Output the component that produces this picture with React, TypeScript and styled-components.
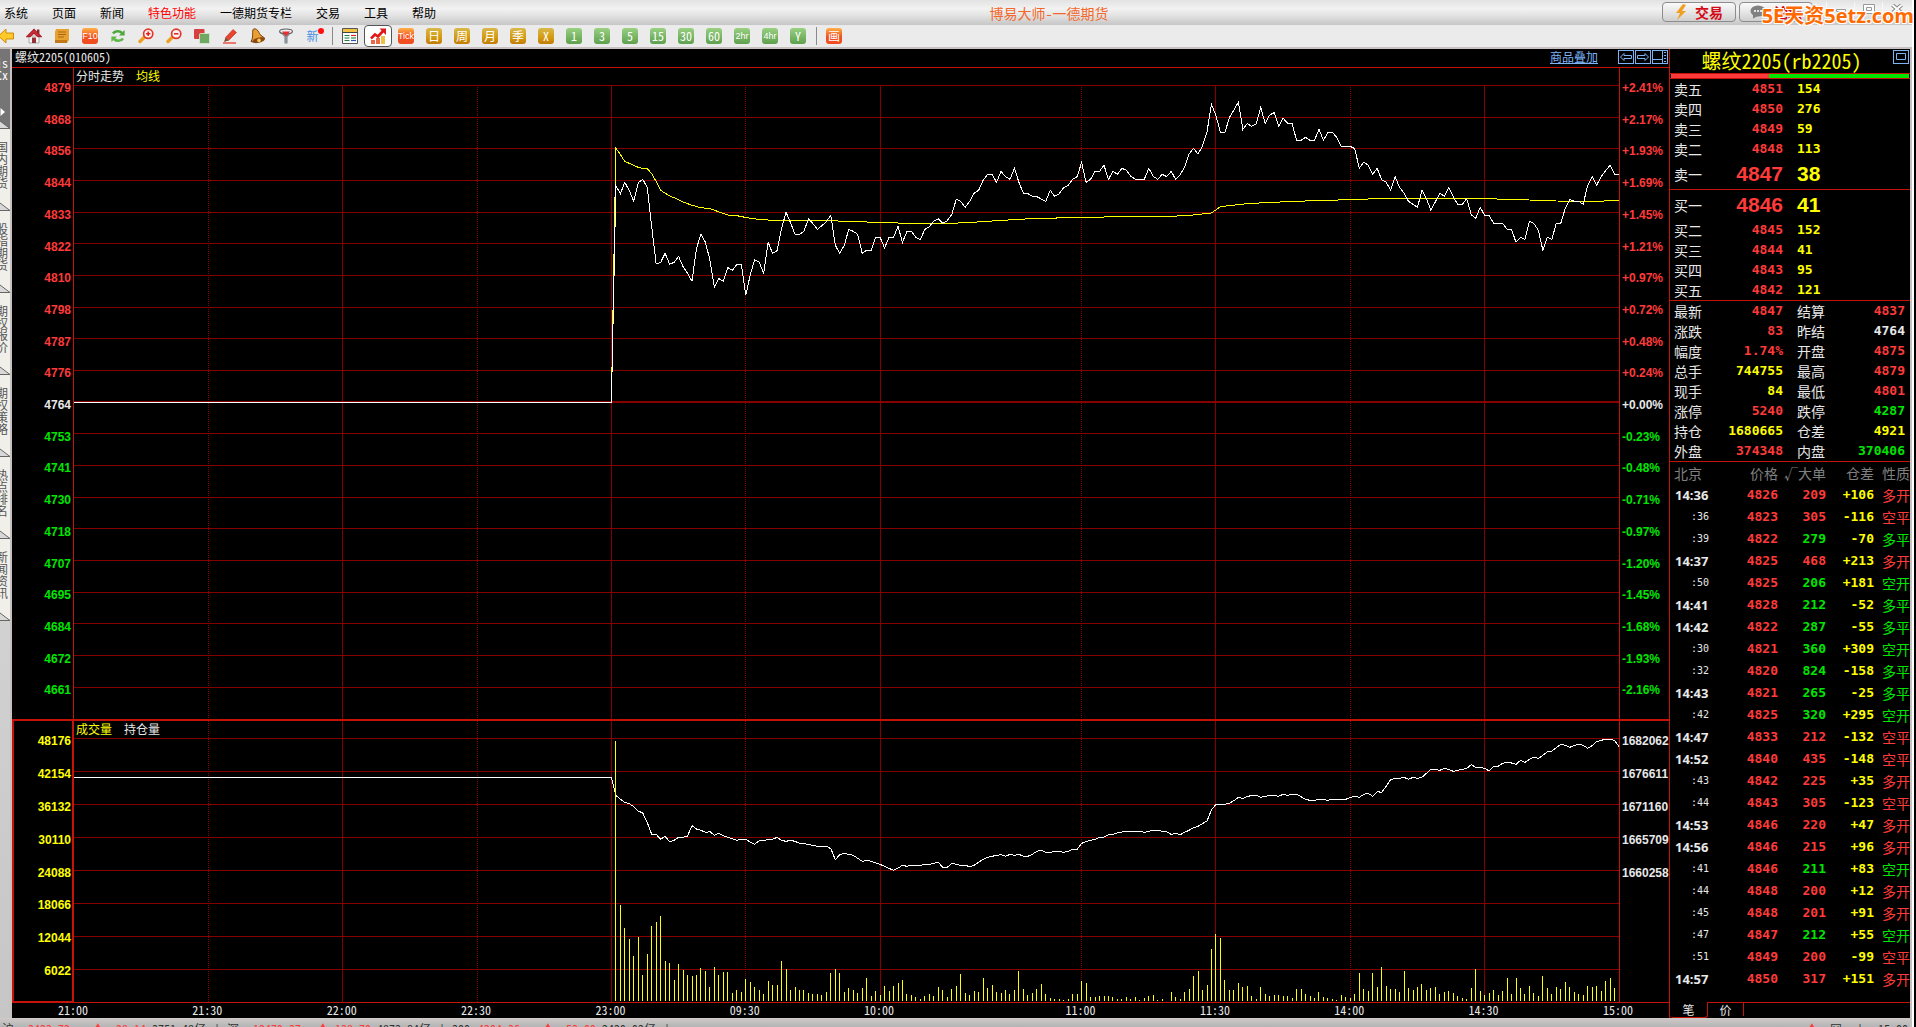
import React from "react";
import styled, { createGlobalStyle } from "styled-components";

/* ---------- theme values ---------- */

const RED = "#ff3a3a";
const GREEN = "#00e600";
const YELLOW = "#ffff00";
const WHITE = "#e8e8e8";
const FRAME = "#c41408";
const GRID = "#860000";
const BLUE = "#7db4f5";

const SONG = '"Noto Sans Mono CJK SC", "Noto Sans CJK SC", monospace';
const MONO = '"DejaVu Sans Mono", "Noto Sans CJK SC", monospace';
const ARIAL = '"Liberation Sans", "Noto Sans CJK SC", sans-serif';

const toneColor: Record<string, string> = {
  r: RED,
  g: GREEN,
  y: YELLOW,
  w: WHITE,
};

const GlobalStyle = createGlobalStyle`
  *, *::before, *::after { box-sizing: border-box; }
  body { margin: 0; background: #000; overflow: hidden; }
  button, a { font: inherit; color: inherit; }
  button { padding: 0; border: 0; background: none; cursor: pointer; }
  svg { display: block; }
`;

/* ---------- data ---------- */

const menus = ["系统", "页面", "新闻", "特色功能", "一德期货专栏", "交易", "工具", "帮助"];

const priceLabels = [
  4879, 4868, 4856, 4844, 4833, 4822, 4810, 4798, 4787, 4776, 4764, 4753, 4741, 4730, 4718, 4707,
  4695, 4684, 4672, 4661,
];
const percentLabels = [
  "+2.41%", "+2.17%", "+1.93%", "+1.69%", "+1.45%", "+1.21%", "+0.97%", "+0.72%", "+0.48%",
  "+0.24%", "+0.00%", "-0.23%", "-0.48%", "-0.71%", "-0.97%", "-1.20%", "-1.45%", "-1.68%",
  "-1.93%", "-2.16%",
];
const volumeLabels = ["48176", "42154", "36132", "30110", "24088", "18066", "12044", "6022"];
const interestLabels = ["1682062", "1676611", "1671160", "1665709", "1660258", "", "", ""];

/* session length up to the next label, in trading minutes */
const timeAxis: [string, number][] = [
  ["21:00", 30], ["21:30", 30], ["22:00", 30], ["22:30", 30], ["23:00", 30], ["09:30", 30],
  ["10:00", 45], ["11:00", 30], ["11:30", 30], ["14:00", 30], ["14:30", 30], ["15:00", 0],
];
const TOTAL_MINUTES = 345;
const NIGHT_MINUTES = 120;

/* one value per minute from the 23:00 mark, in vertical plot units */
const price = [
  967, 317, 341, 307, 332, 364, 308, 298, 322, 440, 552, 547, 520, 553, 547, 529, 560, 580, 604,
  505, 463, 487, 540, 622, 596, 604, 563, 571, 553, 553, 646, 585, 539, 546, 580, 487, 520, 512,
  445, 397, 428, 463, 463, 454, 416, 431, 448, 437, 425, 406, 496, 520, 496, 448, 454, 463, 520,
  511, 511, 472, 472, 504, 472, 472, 439, 487, 454, 454, 472, 479, 448, 440, 424, 416, 430, 422,
  404, 358, 364, 382, 364, 340, 331, 301, 283, 283, 307, 274, 290, 298, 265, 307, 340, 341, 349,
  350, 357, 364, 331, 349, 341, 323, 316, 298, 290, 247, 307, 298, 274, 274, 256, 298, 274, 283,
  265, 271, 289, 298, 298, 298, 265, 289, 298, 283, 290, 274, 298, 284, 262, 222, 205, 222, 198,
  155, 73, 107, 157, 157, 113, 90, 67, 148, 131, 139, 131, 82, 131, 105, 98, 139, 115, 130, 130,
  181, 181, 172, 181, 181, 148, 181, 157, 157, 173, 199, 199, 199, 206, 265, 247, 255, 283, 265,
  299, 306, 331, 290, 322, 340, 364, 373, 382, 331, 356, 391, 365, 340, 349, 322, 350, 374, 374,
  356, 404, 415, 382, 406, 406, 430, 430, 430, 447, 448, 487, 472, 478, 424, 431, 451, 511, 472,
  478, 430, 430, 385, 358, 364, 364, 373, 316, 290, 316, 290, 272, 256, 283, 283,
];

const average: [number, number][] = [
  [0, 967], [1, 205], [2, 223], [3, 245], [4, 250], [6, 262], [7, 265], [8, 266], [9, 281],
  [10, 305], [11, 331], [13, 348], [14, 353], [16, 366], [18, 376], [20, 383], [22, 386],
  [26, 405], [28, 407], [31, 415], [33, 418], [36, 421], [50, 422], [51, 424], [57, 426],
  [60, 427], [66, 430], [76, 430], [83, 425], [86, 422], [91, 418], [95, 415], [104, 413],
  [113, 410], [125, 409], [130, 405], [134, 399], [136, 380], [142, 371], [146, 368], [151, 365],
  [157, 362], [165, 359], [171, 356], [195, 356], [203, 359], [211, 363], [220, 364], [225, 361],
];

const interest = [
  232, 286, 298, 307, 311, 320, 333, 339, 367, 403, 403, 418, 409, 425, 421, 412, 412, 408, 377,
  387, 391, 397, 395, 406, 400, 407, 412, 416, 421, 418, 418, 426, 433, 422, 422, 418, 418, 412,
  421, 424, 421, 424, 430, 431, 433, 436, 439, 439, 439, 446, 479, 464, 460, 463, 466, 475, 484,
  481, 484, 489, 493, 499, 505, 511, 504, 496, 499, 496, 496, 496, 493, 493, 490, 487, 502, 502,
  490, 493, 496, 496, 500, 496, 487, 478, 472, 469, 466, 464, 469, 463, 466, 463, 469, 469, 463,
  454, 451, 457, 457, 454, 454, 457, 454, 448, 448, 430, 425, 421, 418, 412, 411, 404, 403, 399,
  396, 394, 394, 394, 394, 397, 394, 391, 391, 394, 395, 403, 400, 404, 397, 391, 383, 379, 371,
  363, 330, 313, 313, 313, 310, 302, 292, 295, 290, 286, 286, 292, 289, 286, 286, 289, 283, 286,
  283, 283, 290, 298, 301, 301, 298, 298, 301, 298, 298, 298, 298, 292, 289, 292, 283, 280, 289,
  275, 277, 259, 239, 235, 235, 232, 238, 232, 235, 232, 220, 208, 208, 211, 205, 208, 214, 211,
  208, 205, 194, 202, 202, 205, 213, 199, 199, 190, 187, 189, 193, 181, 187, 178, 172, 175, 166,
  155, 153, 143, 133, 136, 142, 136, 133, 136, 145, 137, 125, 121, 118, 118, 121, 139,
];

const volume = [
  903, 123, 615, 684, 717, 768, 711, 825, 762, 678, 666, 648, 783, 789, 840, 792, 810, 825, 828,
  825, 804, 813, 861, 801, 825, 816, 816, 879, 870, 876, 837, 846, 861, 870, 882, 843, 855, 855,
  783, 807, 870, 861, 870, 870, 879, 882, 882, 885, 876, 819, 807, 819, 876, 864, 870, 879, 864,
  834, 888, 873, 885, 858, 873, 858, 849, 840, 882, 885, 891, 897, 888, 882, 888, 861, 870, 891,
  867, 858, 822, 879, 885, 873, 876, 834, 864, 855, 876, 879, 870, 882, 870, 813, 867, 885, 879,
  867, 852, 882, 894, 897, 897, 900, 897, 882, 882, 843, 849, 891, 891, 888, 888, 888, 891, 897,
  897, 891, 897, 891, 900, 894, 888, 885, 900, 897, 903, 876, 891, 897, 876, 867, 828, 813, 870,
  855, 747, 702, 714, 840, 870, 870, 849, 861, 858, 888, 897, 861, 882, 888, 885, 885, 888, 888,
  894, 867, 867, 882, 888, 894, 876, 891, 894, 897, 900, 885, 891, 894, 882, 819, 867, 873, 819,
  861, 801, 858, 867, 867, 876, 813, 864, 870, 861, 852, 870, 864, 861, 882, 876, 873, 879, 888,
  894, 897, 864, 807, 873, 885, 879, 870, 885, 873, 834, 882, 834, 864, 882, 858, 879, 888, 828,
  864, 882, 861, 867, 846, 861, 876, 882, 885, 858, 861, 858, 873, 843, 834, 864, 828,
];

const asks: [string, string, string][] = [
  ["卖五", "4851", "154"], ["卖四", "4850", "276"], ["卖三", "4849", "59"],
  ["卖二", "4848", "113"], ["卖一", "4847", "38"],
];
const bids: [string, string, string][] = [
  ["买一", "4846", "41"], ["买二", "4845", "152"], ["买三", "4844", "41"],
  ["买四", "4843", "95"], ["买五", "4842", "121"],
];

type Stat = [string, string, string];
const stats: [Stat, Stat][] = [
  [["最新", "4847", "r"], ["结算", "4837", "r"]],
  [["涨跌", "83", "r"], ["昨结", "4764", "w"]],
  [["幅度", "1.74%", "r"], ["开盘", "4875", "r"]],
  [["总手", "744755", "y"], ["最高", "4879", "r"]],
  [["现手", "84", "y"], ["最低", "4801", "r"]],
  [["涨停", "5240", "r"], ["跌停", "4287", "g"]],
  [["持仓", "1680665", "y"], ["仓差", "4921", "y"]],
  [["外盘", "374348", "r"], ["内盘", "370406", "g"]],
];

/* time, price, lots, change in interest, kind, tone of the lots, tone of the kind */
const ticks: [string, string, string, string, string, string, string][] = [
  ["14:36", "4826", "209", "+106", "多开", "r", "r"],
  [":36", "4823", "305", "-116", "空平", "r", "r"],
  [":39", "4822", "279", "-70", "多平", "g", "g"],
  ["14:37", "4825", "468", "+213", "多开", "r", "r"],
  [":50", "4825", "206", "+181", "空开", "g", "g"],
  ["14:41", "4828", "212", "-52", "多平", "g", "g"],
  ["14:42", "4822", "287", "-55", "多平", "g", "g"],
  [":30", "4821", "360", "+309", "空开", "g", "g"],
  [":32", "4820", "824", "-158", "多平", "g", "g"],
  ["14:43", "4821", "265", "-25", "多平", "g", "g"],
  [":42", "4825", "320", "+295", "空开", "g", "g"],
  ["14:47", "4833", "212", "-132", "空平", "r", "r"],
  ["14:52", "4840", "435", "-148", "空平", "r", "r"],
  [":43", "4842", "225", "+35", "多开", "r", "r"],
  [":44", "4843", "305", "-123", "空平", "r", "r"],
  ["14:53", "4846", "220", "+47", "多开", "r", "r"],
  ["14:56", "4846", "215", "+96", "多开", "r", "r"],
  [":41", "4846", "211", "+83", "空开", "g", "g"],
  [":44", "4848", "200", "+12", "多开", "r", "r"],
  [":45", "4848", "201", "+91", "多开", "r", "r"],
  [":47", "4847", "212", "+55", "空开", "g", "g"],
  [":51", "4849", "200", "-99", "空平", "r", "r"],
  ["14:57", "4850", "317", "+151", "多开", "r", "r"],
];

const sideTabs = ["国内期货", "股指期货", "期权报价", "期权策略", "热点排名", "新闻资讯"];

/* name, level, change, turnover */
const indexes: [string, string, string, string][] = [
  ["沪", "3423.72", "▲ -28.14", "3751.48亿"],
  ["深", "12479.37", "▲-138.70", "4873.84亿"],
  ["300", "4204.36", "▲ -53.09", "2429.92亿"],
];

/* ---------- window frame ---------- */

const Window = styled.div`
  display: flex;
  flex-direction: column;
  height: 100vh;
  overflow: hidden;
  background: #000;
  border-right: 2px solid #000;
  font-family: ${SONG};
  font-size: 12px;
`;

const Inner = styled.div`
  flex: 1;
  min-height: 0;
  display: flex;
  flex-direction: column;
  border-right: 2px solid #fff;
`;

const MenuBar = styled.header`
  position: relative;
  display: flex;
  justify-content: space-between;
  align-items: center;
  height: 25px;
  background: linear-gradient(#e2e2e2, #f2f2f2 35%, #e4e4e4 60%, #c6c6c6);
`;

const MenuList = styled.nav`
  display: flex;
  gap: 24px;
  padding-left: 4px;
`;

const MenuButton = styled.button<{ $hot?: boolean }>`
  white-space: nowrap;
  line-height: 24px;
  color: ${(p) => (p.$hot ? "#ff0000" : "#000")};
`;

const AppTitle = styled.h1`
  margin: 0;
  font-size: 14px;
  font-weight: 400;
  line-height: 24px;
  color: #f2682a;
`;

const WindowTools = styled.div`
  display: flex;
  align-items: flex-start;
  gap: 3px;
  height: 25px;
  padding-top: 2px;
`;

const PillButton = styled.button`
  display: flex;
  align-items: center;
  justify-content: center;
  gap: 8px;
  width: 74px;
  height: 20px;
  border: 1px solid #8c8c8c;
  border-radius: 4px;
  background: linear-gradient(#fafafa, #e6e6e6 50%, #cfcfcf);
  font-size: 14px;
  font-weight: 700;
  line-height: 16px;
  color: #d40a14;
`;

const WindowButtons = styled.div`
  display: flex;
  width: 96px;
  padding-left: 10px;
`;

const WindowButton = styled.button`
  display: flex;
  align-items: center;
  justify-content: center;
  width: 28px;
  height: 14px;
  border-left: 1px solid #f8f8f8;
`;

const Watermark = styled.span`
  position: absolute;
  top: 0;
  right: -2px;
  font-family: "Open Sans", "Noto Sans CJK SC", sans-serif;
  font-size: 20px;
  font-weight: 700;
  line-height: 32px;
  color: #ff6a00;
  text-shadow: 1px 1px 0 #fff, -1px -1px 0 #fff, 1px -1px 0 #fff, -1px 1px 0 #fff;
  white-space: nowrap;
  pointer-events: none;
`;

/* ---------- toolbar ---------- */

const ToolBar = styled.div`
  display: flex;
  height: 24px;
  margin-left: -8px;
  background: #ebebeb;
  border-bottom: 2px solid #c9c1c1;
`;

const ToolButton = styled.button<{ $active?: boolean }>`
  display: flex;
  align-items: center;
  justify-content: center;
  width: 28px;
  height: 22px;
  border-radius: 4px;
  border: 1px solid ${(p) => (p.$active ? "#555" : "transparent")};
  background: ${(p) => (p.$active ? "#fff" : "transparent")};
`;

const Separator = styled.span`
  width: 8px;
  display: flex;
  justify-content: center;
  &::after {
    content: "";
    width: 1px;
    height: 18px;
    margin-top: 2px;
    background: #8a8a8a;
  }
`;

const chipFill: Record<string, string> = {
  gold: "linear-gradient(#d8b84c, #d49a10 60%, #c07c08)",
  green: "linear-gradient(#9ad082, #5ea04e)",
  orange: "linear-gradient(#ffb048, #f05020 55%, #f04c20)",
};

const Chip = styled.span<{ $kind: string; $small?: boolean }>`
  display: flex;
  align-items: center;
  justify-content: center;
  width: 16px;
  height: 16px;
  border-radius: 3px;
  background: ${(p) => chipFill[p.$kind]};
  font-family: ${(p) => (p.$small ? '"Liberation Sans Narrow", "Liberation Sans", sans-serif' : SONG)};
  font-size: ${(p) => (p.$small ? "9px" : "12px")};
  line-height: 16px;
  color: #fff;
`;

const chips: [string, string, boolean?][] = [
  ["Tick", "orange", true], ["日", "gold"], ["周", "gold"], ["月", "gold"], ["季", "gold"],
  ["X", "gold"], ["1", "green"], ["3", "green"], ["5", "green"], ["15", "green"],
  ["30", "green"], ["60", "green"], ["2hr", "green", true], ["4hr", "green", true],
  ["Y", "green"],
];

const Icon = ({ children, size = 16 }: { children: React.ReactNode; size?: number }) => (
  <svg width={size} height={size} viewBox="0 0 16 16" aria-hidden="true">
    {children}
  </svg>
);

const Magnifier = ({ plus }: { plus?: boolean }) => (
  <Icon>
    <path d="M6.5 9 2 13.5" stroke="#f0a020" strokeWidth="3.4" strokeLinecap="round" />
    <circle cx="10.2" cy="5.8" r="4.6" fill="#fff2f0" stroke="#e03a2c" strokeWidth="1.7" />
    <path d={plus ? "M8 5.8h4.4M10.2 3.6V8" : "M8 5.8h4.4"} stroke="#e02020" strokeWidth="1.5" />
  </Icon>
);

const toolIcons: [string, React.ReactNode][] = [
  ["后退", (
    <Icon key="back">
      <path d="M.5 8 8 1v4h7.500v6H8v4z" fill="#ffc928" stroke="#d08a10" strokeWidth="1" />
    </Icon>
  )],
  ["主页", (
    <Icon key="home">
      <path d="M3 8h10v7H3z" fill="#f4f4f4" stroke="#999" strokeWidth=".8" />
      <path d="M11 1.5h2.4V6H11z" fill="#8c2424" />
      <path d="M.8 8.600 8 1.400l7.200 7.200H12L8 5 4 8.600z" fill="#c83232" stroke="#b02030" strokeWidth="1.2" />
      <path d="M6 9.500h4V15H6z" fill="#983038" />
    </Icon>
  )],
  ["公告", (
    <Icon key="note">
      <path d="M2 1h13v11l-2 3H1V4z" fill="#e8a030" />
      <path d="M1 12h12v3H1z" fill="#c07818" />
      <path d="M4 4h8M4 6.500h8M4 9h6" stroke="#a86810" strokeWidth="1" />
    </Icon>
  )],
  ["F10", <Chip key="f10" $kind="orange" $small>F10</Chip>],
  ["刷新", (
    <Icon key="refresh">
      <path d="M3 5.500c2-3 6.500-3 9-.5" fill="none" stroke="#4ca83c" strokeWidth="2.600" />
      <path d="M14.600 2v5.500H9z" fill="#4ca83c" />
      <path d="M13 10.500c-2 3-6.500 3-9 .5" fill="none" stroke="#60b848" strokeWidth="2.600" />
      <path d="M1.400 14V8.500H7z" fill="#60b848" />
    </Icon>
  )],
  ["放大", <Magnifier key="in" plus />],
  ["缩小", <Magnifier key="out" />],
  ["叠加", (
    <Icon key="overlay">
      <rect x="0" y="1" width="10.500" height="10" rx="1" fill="#d84040" />
      <rect x="5.500" y="5.500" width="10" height="10" rx="1" fill="#6ea862" stroke="#d8ecd0" strokeWidth=".8" />
    </Icon>
  )],
  ["画线", (
    <Icon key="pencil">
      <path d="M3.500 9.500 11 1.500l3.500 3-8 8z" fill="#e8452e" stroke="#b82c1c" strokeWidth=".6" />
      <path d="M3.500 9.500 2 14l4.500-1.500z" fill="#7a5030" />
      <path d="M1 15h13" stroke="#e84838" strokeWidth="1.400" />
    </Icon>
  )],
  ["预警", (
    <Icon key="bell">
      <path d="M3.500 1C7 0 8.500 3.500 10 6.500l5 4L3 14 1 13.500C4 9 1.500 3 3.500 1z" fill="#e8a030" stroke="#7c4010" strokeWidth="1" />
      <ellipse cx="8.600" cy="12.200" rx="6.400" ry="2.600" transform="rotate(-14 8.600 12.200)" fill="#8c4818" />
      <circle cx="9" cy="12.400" r="1.800" fill="#ffd050" />
    </Icon>
  )],
  ["筛选", (
    <Icon key="filter">
      <path d="M2 3.500h12L9.600 9v6.500H6.400V9z" fill="#8a9298" />
      <ellipse cx="8" cy="3.400" rx="6.400" ry="2.400" fill="#f0f0f0" stroke="#5c6468" strokeWidth="1.200" />
      <path d="M4 3.500h8L8 8.500z" fill="#e83030" />
    </Icon>
  )],
];

const NewMark = styled.span`
  position: relative;
  padding-right: 3px;
  line-height: 20px;
  color: #4a90e0;
  &::after {
    content: "";
    position: absolute;
    top: 2px;
    right: -2px;
    width: 6px;
    height: 6px;
    border-radius: 50%;
    background: #ff1010;
  }
`;

/* ---------- body ---------- */

const Body = styled.div`
  flex: 1;
  min-height: 0;
  display: flex;
  border-right: 2px solid #c9c1c1;
`;

const SideBar = styled.nav`
  width: 12px;
  flex: none;
  overflow: hidden;
  background: linear-gradient(#e2e2e2, #c6c6c6);
  border-right: 2px solid #c9c1c1;
`;

const SideTab = styled.button<{ $active?: boolean }>`
  position: relative;
  display: flex;
  flex-direction: column;
  justify-content: flex-start;
  width: 10px;
  height: ${(p) => (p.$active ? "80px" : "82px")};
  padding-top: ${(p) => (p.$active ? "8px" : "12px")};
  overflow: hidden;
  background: ${(p) => (p.$active ? "#757575" : "#f0efea")};
  color: ${(p) => (p.$active ? "#fff" : "#555")};
  & > span {
    display: block;
    width: 12px;
    margin-left: -4px;
    line-height: 12px;
    word-break: break-all;
    text-align: left;
  }
`;

const CornerMark = styled.svg`
  position: absolute;
  left: 0;
  bottom: 0;
`;

const TabCorner = ({ arrow }: { arrow?: boolean }) => (
  <CornerMark width="10" height="24" viewBox="0 0 10 24" aria-hidden="true">
    {arrow && <path d="M.5 3 5 7 .5 11z" fill="#fff" />}
    <path d="M0 16 10 23.500V24H0z" fill="#d8d8d8" />
    <path d="M0 16 10 23.500H0" fill="none" stroke="#666" strokeWidth="1" />
  </CornerMark>
);

const Chart = styled.main`
  flex: 1;
  min-width: 0;
  display: flex;
  flex-direction: column;
  background: #000;
`;

const ChartHead = styled.div`
  display: flex;
  justify-content: space-between;
  height: 19px;
  padding: 0 1px 0 3px;
  border-bottom: 1px solid ${FRAME};
  line-height: 16px;
  color: ${WHITE};
`;

const HeadTools = styled.div`
  display: flex;
  gap: 1px;
`;

const OverlayLink = styled.a`
  margin-right: 19px;
  color: ${BLUE};
  text-decoration: underline;
`;

const BoxButton = styled.button`
  width: 16px;
  height: 14px;
  margin-top: 1px;
  border: 1px solid ${BLUE};
`;

const Section = styled.section<{ $grow: number; $thick?: boolean }>`
  flex: ${(p) => p.$grow} 1 0;
  min-height: 0;
  display: grid;
  grid-template-columns: 62px 1fr 50px;
  border-top: ${(p) => (p.$thick ? "2px" : "0")} solid ${FRAME};
  border-bottom: ${(p) => (p.$thick ? "1px" : "0")} solid ${FRAME};
`;

const Scale = styled.div<{ $side: "left" | "right"; $boxed?: boolean }>`
  display: flex;
  flex-direction: column;
  min-height: 0;
  padding-top: 17px;
  font-family: ${ARIAL};
  font-weight: 700;
  text-align: ${(p) => (p.$side === "left" ? "right" : "left")};
  border: 0 solid ${FRAME};
  ${(p) =>
    p.$side === "left"
      ? `border-right-width: ${p.$boxed ? 2 : 1}px; padding-right: ${p.$boxed ? 1 : 2}px;`
      : "border-left-width: 1px; padding-left: 2px;"}
  ${(p) => (p.$boxed && p.$side === "left" ? "border-left-width: 2px; border-bottom-width: 1px;" : "")}
`;

const ScaleMark = styled.div<{ $color: string }>`
  flex: 1 1 0;
  min-height: 0;
  color: ${(p) => p.$color};
  & > span {
    display: block;
    margin-top: -3px;
    line-height: 13px;
    white-space: nowrap;
  }
`;

const Plot = styled.div`
  display: grid;
  grid-template-rows: 17px 1fr;
  grid-template-columns: 1fr;
  min-width: 0;
  min-height: 0;
`;

const PlotTitle = styled.div`
  grid-area: 1 / 1;
  display: flex;
  gap: 12px;
  padding-left: 2px;
  line-height: 16px;
  color: ${WHITE};
  z-index: 1;
`;

const Tint = styled.span<{ $color: string }>`
  color: ${(p) => p.$color};
`;

const PlotArea = styled.svg<{ $full?: boolean }>`
  grid-area: ${(p) => (p.$full ? "1 / 1 / 3 / 2" : "2 / 1")};
  width: 100%;
  height: 100%;
  min-height: 0;
  overflow: visible;
  & > * {
    vector-effect: non-scaling-stroke;
    shape-rendering: crispEdges;
    fill: none;
  }
`;

const TimeAxis = styled.div`
  display: flex;
  height: 15px;
  padding: 0 50px 0 62px;
  color: ${WHITE};
`;

const TimeMark = styled.span<{ $minutes: number }>`
  flex: ${(p) => p.$minutes} 1 0;
  width: 0;
  text-indent: -16px;
  line-height: 14px;
  white-space: nowrap;
`;

/* ---------- quote panel ---------- */

const Quote = styled.aside`
  width: 241px;
  flex: none;
  display: flex;
  flex-direction: column;
  background: #000;
  border-left: 1px solid ${FRAME};
  color: ${WHITE};
`;

const QuoteHead = styled.div`
  display: grid;
  grid-template-columns: 14px 1fr 16px;
  padding-right: 1px;
  height: 25px;
  border-bottom: 1px solid ${FRAME};
`;

const QuoteName = styled.h2`
  grid-column: 2;
  margin: 0;
  padding-right: 14px;
  font-size: 20px;
  font-weight: 400;
  line-height: 24px;
  text-align: center;
  white-space: nowrap;
  color: ${YELLOW};
`;

const Ratio = styled.div`
  display: flex;
  height: 5px;
  padding: 0 1px;
  border-bottom: 1px solid ${FRAME};
  & > span:first-child { flex: 98; background: ${RED}; }
  & > span:last-child { flex: 140; background: ${GREEN}; }
`;

const Table = styled.table`
  width: 100%;
  table-layout: fixed;
  border-collapse: separate;
  border-spacing: 0;
  font-size: 14px;
  th, td { padding: 0; font-weight: 400; text-align: left; white-space: nowrap; }
`;

const RuledTable = styled(Table)`
  border-bottom: 1px solid ${FRAME};
`;

const Row = styled.tr<{ $height: number }>`
  height: ${(p) => p.$height}px;
  line-height: 18px;
`;

const Label = styled.th<{ $indent?: number; $width?: number }>`
  && { padding-left: ${(p) => p.$indent ?? 4}px; }
  width: ${(p) => (p.$width ? `${p.$width}px` : "auto")};
`;

const Num = styled.td<{ $tone: string; $big?: boolean; $left?: boolean; $width?: number; $inset?: number }>`
  && {
    font-family: ${(p) => (p.$big ? ARIAL : MONO)};
    font-size: ${(p) => (p.$big ? "21px" : "13px")};
    font-weight: 700;
    text-align: ${(p) => (p.$left ? "left" : "right")};
    padding-left: ${(p) => (p.$left ? "14px" : "0")};
    padding-right: ${(p) => p.$inset ?? 0}px;
  }
  width: ${(p) => (p.$width ? `${p.$width}px` : "auto")};
  color: ${(p) => toneColor[p.$tone]};
`;

const HeadCell = styled.th<{ $width: number; $first?: boolean }>`
  && {
    text-align: ${(p) => (p.$first ? "left" : "right")};
    padding-left: ${(p) => (p.$first ? "4px" : "0")};
  }
  width: ${(p) => p.$width}px;
  color: #808080;
`;

const TimeCell = styled.td<{ $minute: boolean }>`
  && {
    padding-left: ${(p) => (p.$minute ? "5px" : "21px")};
    font-family: ${(p) => (p.$minute ? '"Noto Sans", sans-serif' : MONO)};
    font-size: ${(p) => (p.$minute ? "13px" : "10px")};
    font-weight: ${(p) => (p.$minute ? 700 : 400)};
  }
`;

const KindCell = styled.td<{ $tone: string }>`
  && { text-align: right; }
  color: ${(p) => toneColor[p.$tone]};
`;

const QuoteTabs = styled.div`
  flex: 1;
  display: flex;
  align-items: flex-end;
`;

const TabStrip = styled.div`
  flex: 1;
  display: flex;
  height: 16px;
`;

const QuoteTab = styled.button<{ $active?: boolean }>`
  width: ${(p) => (p.$active ? 38 : 36)}px;
  height: ${(p) => (p.$active ? 16 : 14)}px;
  line-height: 14px;
  border: 0 solid ${FRAME};
  border-width: ${(p) => (p.$active ? "0 1px 1px 0" : "1px 1px 0 0")};
  border-radius: ${(p) => (p.$active ? "0 0 3px 3px" : "0")};
  color: ${WHITE};
`;

const TabRule = styled.span`
  flex: 1;
  border-top: 1px solid ${FRAME};
`;

/* ---------- status bar ---------- */

const StatusBar = styled.footer`
  display: flex;
  justify-content: space-between;
  height: 9px;
  overflow: hidden;
  padding: 4px 2px 0 2px;
  background: linear-gradient(#d0caca, #b4b4b4);
  border-right: 2px solid #c9c1c1;
  line-height: 14px;
  color: #333;
`;

const IndexList = styled.div`
  display: flex;
`;

const IndexItem = styled.div`
  display: grid;
  grid-template-columns: 26px 64px 54px 68px 13px;
  white-space: pre;
`;

const StatusTools = styled.div`
  display: flex;
  gap: 12px;
`;

/* ---------- chart drawing ---------- */

const toPoints = (values: number[]) =>
  values.map((v, i) => `${NIGHT_MINUTES + i},${v}`).join(" ");

const gridMinutes = [30, 60, 90, 120, 150, 180, 225, 255, 285, 315];
const dottedMinutes = new Set([30, 90, 150, 225, 285]);

const Grid = ({ top, first, step, rows, bottom }: {
  top: number; first: number; step: number; rows: number; bottom: number;
}) => (
  <>
    {Array.from({ length: rows }, (_, i) => (
      <line key={`h${i}`} x1="0" x2={TOTAL_MINUTES} y1={first + i * step} y2={first + i * step} stroke={GRID} />
    ))}
    {gridMinutes.map((m) => (
      <line
        key={`v${m}`}
        x1={m}
        x2={m}
        y1={top}
        y2={bottom}
        stroke={GRID}
        strokeDasharray={dottedMinutes.has(m) ? "1 1" : undefined}
      />
    ))}
  </>
);

const levelColor = (i: number) => (i < 10 ? RED : i === 10 ? WHITE : GREEN);

const PriceSection = () => (
  <Section $grow={651}>
    <Scale $side="left">
      {priceLabels.map((v, i) => (
        <ScaleMark key={v} $color={levelColor(i)}><span>{v}</span></ScaleMark>
      ))}
    </Scale>
    <Plot>
      <PlotTitle><span>分时走势</span><Tint $color={YELLOW}>均线</Tint></PlotTitle>
      <PlotArea viewBox="0 15 345 1902" preserveAspectRatio="none" role="img" aria-label="分时走势">
        <Grid top={15} first={16} step={95} rows={20} bottom={1917} />
        <line x1="0" x2={TOTAL_MINUTES} y1="964" y2="964" stroke={GRID} />
        <line x1="0" x2={TOTAL_MINUTES} y1="967" y2="967" stroke={GRID} />
        <polyline points={`0,967 ${average.map(([m, v]) => `${NIGHT_MINUTES + m},${v}`).join(" ")}`} stroke={YELLOW} />
        <polyline points={`0,967 ${toPoints(price)}`} stroke="#fff" />
      </PlotArea>
    </Plot>
    <Scale $side="right">
      {percentLabels.map((v, i) => (
        <ScaleMark key={v} $color={levelColor(i)}><span>{v}</span></ScaleMark>
      ))}
    </Scale>
  </Section>
);

const VolumeSection = () => (
  <Section $grow={281} $thick>
    <Scale $side="left" $boxed>
      {volumeLabels.map((v) => (
        <ScaleMark key={v} $color={YELLOW}><span>{v}</span></ScaleMark>
      ))}
    </Scale>
    <Plot>
      <PlotTitle><Tint $color={YELLOW}>成交量</Tint><span>持仓量</span></PlotTitle>
      <PlotArea $full viewBox="0 63 345 843" preserveAspectRatio="none" role="img" aria-label="成交量">
        <Grid top={63} first={115} step={99} rows={8} bottom={906} />
        <polyline points={`0,232 ${toPoints(interest)}`} stroke="#fff" />
        <path
          d={volume.map((v, i) => (v < 903 ? `M${NIGHT_MINUTES + i} 903V${v}` : "")).join("")}
          stroke={YELLOW}
        />
      </PlotArea>
    </Plot>
    <Scale $side="right">
      {interestLabels.map((v, i) => (
        <ScaleMark key={i} $color={WHITE}><span>{v}</span></ScaleMark>
      ))}
    </Scale>
  </Section>
);

const BookTable = ({ rows }: { rows: [string, string, string][] }) => (
  <RuledTable>
    <tbody>
      {rows.map(([label, p, v]) => {
        const best = label.endsWith("一");
        return (
          <Row key={label} $height={best ? 30 : 20}>
            <Label scope="row" $width={45}>{label}</Label>
            <Num $tone="r" $big={best} $width={68}>{p}</Num>
            <Num $tone="y" $big={best} $left>{v}</Num>
          </Row>
        );
      })}
    </tbody>
  </RuledTable>
);

export default function App() {
  return (
    <Window>
      <GlobalStyle />
      <Inner>
        <MenuBar>
          <MenuList>
            {menus.map((m) => (
              <MenuButton key={m} $hot={m === "特色功能"}>{m}</MenuButton>
            ))}
          </MenuList>
          <AppTitle>博易大师-一德期货</AppTitle>
          <WindowTools>
            <PillButton>
              <svg width="12" height="16" viewBox="0 0 12 16" aria-hidden="true">
                <path d="M8 0 1 9h4l-3 7 9-9H7l4-6z" fill="#f0a020" />
              </svg>
              交易
            </PillButton>
            <PillButton>
              <svg width="16" height="14" viewBox="0 0 16 14" aria-hidden="true">
                <ellipse cx="8" cy="6" rx="7.500" ry="5.500" fill="#808080" />
                <path d="M3 9v4.500L8 11z" fill="#808080" />
                <path d="M4 6h2M7 6h2M10 6h2" stroke="#fff" strokeWidth="1.500" />
              </svg>
              论坛
            </PillButton>
            <WindowButtons>
              <WindowButton aria-label="最小化">
                <svg width="12" height="10" viewBox="0 0 12 10"><path d="M1.500 5.500h9v2h-9z" fill="#fff" stroke="#999" /></svg>
              </WindowButton>
              <WindowButton aria-label="最大化">
                <svg width="12" height="10" viewBox="0 0 12 10"><path d="M.5.5h11v9H.5zM3.500 3.500h5v3h-5z" fill="#fff" stroke="#999" /></svg>
              </WindowButton>
              <WindowButton aria-label="关闭">
                <svg width="12" height="10" viewBox="0 0 12 10">
                  <path d="m1.500 1 9 8M10.500 1l-9 8" stroke="#888" strokeWidth="4" />
                  <path d="m1.500 1 9 8M10.500 1l-9 8" stroke="#fff" strokeWidth="2" />
                </svg>
              </WindowButton>
            </WindowButtons>
          </WindowTools>
          <Watermark>5E天资5etz.com</Watermark>
        </MenuBar>

        <ToolBar>
          {toolIcons.map(([name, icon]) => (
            <ToolButton key={name} aria-label={name}>{icon}</ToolButton>
          ))}
          <ToolButton><NewMark>新</NewMark></ToolButton>
          <Separator />
          <ToolButton aria-label="报价">
            <Icon>
              <path d="M.5.500h15v15H.5z" fill="#fff" stroke="#555" />
              <path d="M1 1h14v3H1z" fill="#f4c040" />
              <path d="M0 4.500h16" stroke="#444" />
              <path d="M2.500 7.500h5M2.500 10h5M2.500 12.500h5" stroke="#208040" strokeWidth="1.200" />
              <path d="M9 7.500h5" stroke="#e02020" strokeWidth="1.200" />
              <path d="M9 10h5" stroke="#209040" strokeWidth="1.200" />
              <path d="M9 12.500h5" stroke="#3050c0" strokeWidth="1.200" />
            </Icon>
          </ToolButton>
          <ToolButton $active aria-label="走势">
            <Icon>
              <path d="M1 12h4v4H1zM6 10h4v6H6z" fill="#e86848" />
              <path d="M11 8h4v8h-4z" fill="#f0c040" />
              <path d="M1 10.500 5 6.500l3 2L13.500 2.500" fill="none" stroke="#e01818" strokeWidth="2.600" />
              <path d="M9.500.5H16V7z" fill="#e01818" />
            </Icon>
          </ToolButton>
          {chips.map(([text, kind, small]) => (
            <ToolButton key={text}><Chip $kind={kind} $small={small}>{text}</Chip></ToolButton>
          ))}
          <Separator />
          <ToolButton><Chip $kind="orange">画</Chip></ToolButton>
        </ToolBar>

        <Body>
          <SideBar>
            <SideTab $active>
              <span>js</span>
              <span>Cx</span>
              <TabCorner arrow />
            </SideTab>
            {sideTabs.map((t) => (
              <SideTab key={t}><span>{t}</span><TabCorner /></SideTab>
            ))}
          </SideBar>

          <Chart>
            <ChartHead>
              <span>螺纹2205(010605)</span>
              <HeadTools>
                <OverlayLink href="#overlay">商品叠加</OverlayLink>
                <BoxButton aria-label="上一个">
                  <svg width="14" height="12" viewBox="0 0 14 12"><path d="M1.500 6 5 2.500v2h7.500v3H5v2z" fill="none" stroke={BLUE} /></svg>
                </BoxButton>
                <BoxButton aria-label="下一个">
                  <svg width="14" height="12" viewBox="0 0 14 12"><path d="M12.500 6 9 2.500v2H1.500v3H9v2z" fill="none" stroke={BLUE} /></svg>
                </BoxButton>
                <BoxButton aria-label="布局">
                  <svg width="14" height="12" viewBox="0 0 14 12">
                    <path d="M9.500 0v12M0 8.500h9.500" stroke={BLUE} />
                    <path d="M11 1.500h2M11 4.500h2M11 7.500h2M11 10.500h2" stroke={BLUE} />
                  </svg>
                </BoxButton>
              </HeadTools>
            </ChartHead>
            <PriceSection />
            <VolumeSection />
            <TimeAxis>
              {timeAxis.map(([t, m]) => (
                <TimeMark key={t} $minutes={m}>{t}</TimeMark>
              ))}
            </TimeAxis>
          </Chart>

          <Quote>
            <QuoteHead>
              <QuoteName>螺纹2205(rb2205)</QuoteName>
              <BoxButton aria-label="展开">
                <svg width="14" height="12" viewBox="0 0 14 12"><path d="M2.500 2.500h9v6h-9z" fill="none" stroke={BLUE} /></svg>
              </BoxButton>
            </QuoteHead>
            <Ratio><span /><span /></Ratio>
            <BookTable rows={asks} />
            <BookTable rows={bids} />
            <RuledTable>
              <tbody>
                {stats.map(([a, b]) => (
                  <Row key={a[0]} $height={20}>
                    <Label scope="row" $width={45}>{a[0]}</Label>
                    <Num $tone={a[2]} $width={68}>{a[1]}</Num>
                    <Label scope="row" $indent={14} $width={50}>{b[0]}</Label>
                    <Num $tone={b[2]} $inset={5}>{b[1]}</Num>
                  </Row>
                ))}
              </tbody>
            </RuledTable>
            <Table>
              <thead>
                <Row $height={22}>
                  <HeadCell scope="col" $width={50} $first>北京</HeadCell>
                  <HeadCell scope="col" $width={58}>价格</HeadCell>
                  <HeadCell scope="col" $width={48}>√大单</HeadCell>
                  <HeadCell scope="col" $width={48}>仓差</HeadCell>
                  <HeadCell scope="col" $width={36}>性质</HeadCell>
                </Row>
              </thead>
              <tbody>
                {ticks.map(([t, p, lots, diff, kind, lotTone, kindTone], i) => (
                  <Row key={i} $height={22}>
                    <TimeCell $minute={t.length > 3}>{t}</TimeCell>
                    <Num $tone="r">{p}</Num>
                    <Num $tone={lotTone}>{lots}</Num>
                    <Num $tone="y">{diff}</Num>
                    <KindCell $tone={kindTone}>{kind}</KindCell>
                  </Row>
                ))}
              </tbody>
            </Table>
            <QuoteTabs>
              <TabStrip>
                <QuoteTab $active>笔</QuoteTab>
                <QuoteTab>价</QuoteTab>
                <TabRule />
              </TabStrip>
            </QuoteTabs>
          </Quote>
        </Body>

        <StatusBar>
          <IndexList>
            {indexes.map(([name, level, change, turnover]) => (
              <IndexItem key={name}>
                <span>{name}</span>
                <Tint $color={RED}>{level}</Tint>
                <Tint $color={RED}>{change}</Tint>
                <span> {turnover}</span>
                <span>|</span>
              </IndexItem>
            ))}
          </IndexList>
          <StatusTools>
            <Tint $color={RED}>▲</Tint>
            <span>⊠</span>
            <span>↓</span>
            <span>15:00</span>
          </StatusTools>
        </StatusBar>
      </Inner>
    </Window>
  );
}
